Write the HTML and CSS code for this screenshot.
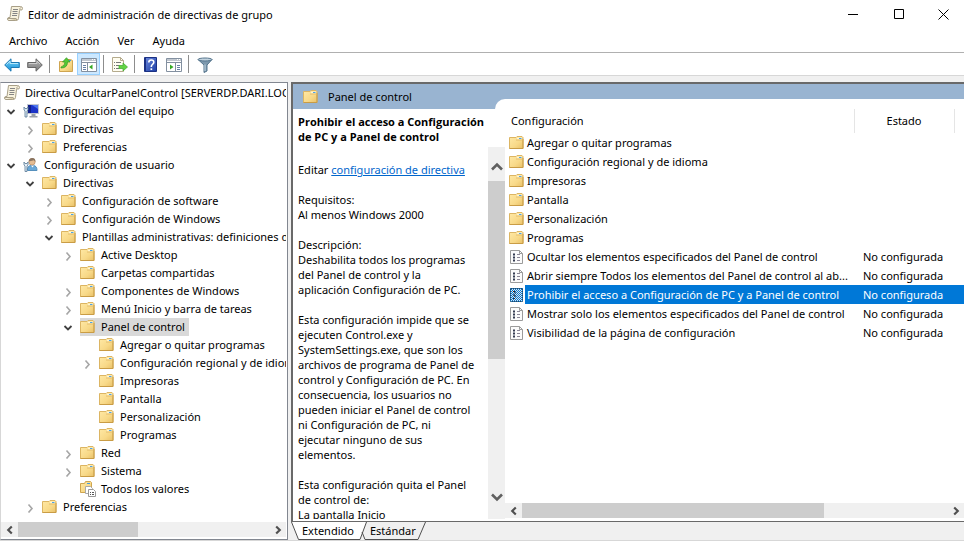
FILE: index.html
```html
<!DOCTYPE html>
<html lang="es">
<head>
<meta charset="utf-8">
<title>Editor de administración de directivas de grupo</title>
<link rel="stylesheet" href="styles.css">
</head>
<body>
<svg class="defs" aria-hidden="true">
  <linearGradient id="gold" x1="0" y1="0" x2="1" y2="1"><stop offset="0" stop-color="#ffe9a6"/><stop offset=".6" stop-color="#f8d988"/><stop offset="1" stop-color="#e8c068"/></linearGradient>
  <linearGradient id="blue" x1="0" y1="0" x2="0" y2="1"><stop offset="0" stop-color="#7fd3f7"/><stop offset="1" stop-color="#0f8fd8"/></linearGradient>
  <linearGradient id="grey" x1="0" y1="0" x2="0" y2="1"><stop offset="0" stop-color="#b5b5b5"/><stop offset="1" stop-color="#7b7b7b"/></linearGradient>
  <linearGradient id="navy" x1="0" y1="0" x2="1" y2="1"><stop offset="0" stop-color="#6d8ade"/><stop offset="1" stop-color="#1d3ea5"/></linearGradient>
  <pattern id="dither" width="2" height="2" patternUnits="userSpaceOnUse"><path fill="#0078d7" d="M0 0h1v1H0zM1 1h1v1H1z"/></pattern>
  <symbol id="folder" viewBox="0 0 16 16">
    <path d="M.5 13.500V2.500h6.500l1-1h5l1 1v11z" fill="url(#gold)" stroke="#dcb563"/>
    <path d="M.5 13.500h13.500V4" fill="none" stroke="#c99c45"/>
    <path d="M7.500 4.500l1-2h4.500v2z" fill="#fff6d4"/><path d="M10 3.500h2.500" stroke="#4ba3e6"/>
    <path d="M7 5h6.500" stroke="#e3bd6c"/>
  </symbol>
  <symbol id="scroll" viewBox="0 0 16 16">
    <path d="M4.500.5h9q2 0 2 2t-2 1.500l-1 .5-1 8q-.5 2-2 2H2Q.5 14.500.5 13t1.500-1.500h1z" fill="#f8f2dd" stroke="#a89f87"/>
    <path d="M1 12.500h8q1 0 .5 2" fill="#d8cba8" stroke="#a89f87"/>
    <path d="M6 3.500h5M5.500 5.500h5M5.500 7.500h5M5 9.500h5" stroke="#858585"/>
    <path d="M13.500 1.500q-1 1-.5 2.500" fill="none" stroke="#a89f87"/>
  </symbol>
  <symbol id="computer" viewBox="0 0 16 16">
    <path d="M4.500 1.500h11v9h-11z" fill="#1c34c8" stroke="#c3c7cf"/><path d="M9 2h6v4z" fill="#4e77ee"/><path d="M5 2h3v8H5z" fill="#11208b"/>
    <path d="M8.500 11h4v2h2v1.500h-8V13h2z" fill="#9aa0a8"/>
    <path d="M1 4v3l1 1v6h2V8l1-1V4L4 5.500H2z" fill="#dceaf5" stroke="#597896" stroke-width=".8"/>
  </symbol>
  <symbol id="user" viewBox="0 0 16 16">
    <path d="M4.500 13.500q-.5-5 4-5h1.500q4 0 4 5z" fill="#6aa8d8" stroke="#5590bd"/><path d="M8 8.500l1.500 2 1.500-2z" fill="#fff"/>
    <circle cx="9" cy="4.800" r="3.200" fill="#e6bd93" stroke="#b98a62" stroke-width=".7"/><path d="M5.800 4.500Q6 .9 9.300 1 12.800 1.200 12.300 5L11 3.300z" fill="#8a7460"/>
    <path d="M1 5v3l1 1v5.500h2V9l1-1V5L4 6.500H2z" fill="#e5eff7" stroke="#597896" stroke-width=".8"/>
  </symbol>
  <symbol id="all" viewBox="0 0 16 16">
    <path d="M.5 11.500v-9h4l1-2h5l1 1v10z" fill="url(#gold)" stroke="#cfa550"/><path d="M7 2.500h3" stroke="#3c9be8"/>
    <path d="M5.500 5.500h5l2 2v5h-7z" fill="#fff" stroke="#aaa"/><path d="M8.500 8.500h5l2 2v5h-7z" fill="#fff" stroke="#999"/>
    <path d="M10 11.500h1M12 11.500h2M10 13.500h1M12 13.500h2" stroke="#555"/>
  </symbol>
  <symbol id="policy" viewBox="0 0 16 16">
    <path d="M1.500 1.500h9l3 3v10h-12z" fill="#fbfbfb" stroke="#9b9b9b"/><path d="M10.500 1.500v3h3" fill="none" stroke="#9b9b9b"/>
    <path d="M4 5.500h2M4 8.500h2M4 11.500h2" stroke="#333b50" stroke-width="2"/><path d="M8 5.500h3M8 8.500h3M8 11.500h3" stroke="#8b8696"/>
  </symbol>
  <symbol id="back" viewBox="0 0 16 16"><path d="M.7 8L7 1.800v3.700h8.300v5H7v3.700z" fill="url(#blue)" stroke="#1b78b4"/><path d="M2.500 7.500L6 4v2.500h8" fill="none" stroke="#b6e8fb"/></symbol>
  <symbol id="forward" viewBox="0 0 16 16"><path d="M15.300 8L9 1.800v3.700H.7v5H9v3.700z" fill="url(#grey)" stroke="#666"/><path d="M2 6.500h8V4l3 3" fill="none" stroke="#ccc"/></symbol>
  <symbol id="up" viewBox="0 0 16 16"><path d="M1.500 14.500V4.500h5l1-2h5l2 1v11z" fill="url(#gold)" stroke="#cfa550"/><path d="M11 3.500h2" stroke="#3c9be8"/><path d="M3 10q4-1 4-5H4.500L8.500.700l3.500 4.300H9.500Q9.500 11 3 11z" fill="#55c936" stroke="#329a24" stroke-width=".7"/></symbol>
  <symbol id="pane-left" viewBox="0 0 16 16"><path d="M.5 1.500h15v13H.5z" fill="#fff" stroke="#8390a0"/><path d="M1 3h14M1 5.500h14" stroke="#8390a0"/><path d="M11 2.500h1M13 2.500h1" stroke="#fff"/><path d="M6.500 6v8" stroke="#8390a0"/><path d="M2 8.500h3M2 10.500h3M2 12.500h3" stroke="#6580a6"/><path d="M11.500 7.500v5L8 10z" fill="#36aa25"/></symbol>
  <symbol id="pane-right" viewBox="0 0 16 16"><path d="M.5 1.500h15v13H.5z" fill="#fff" stroke="#8390a0"/><path d="M1 3h14M1 5.500h14" stroke="#8390a0"/><path d="M11 2.500h1M13 2.500h1" stroke="#fff"/><path d="M9.500 6v8" stroke="#8390a0"/><path d="M11 8.500h3M11 10.500h3M11 12.500h3" stroke="#6580a6"/><path d="M4 7.500v5L7.500 10z" fill="#36aa25"/></symbol>
  <symbol id="export" viewBox="0 0 16 16"><path d="M.5.5h8l3 3v11H.5z" fill="#fffdf0" stroke="#b5ab8d"/><path d="M8.500.5v3h3" fill="none" stroke="#b5ab8d"/><path d="M2 5.500h1M4 5.500h5M2 8.500h1M4 8.500h3M2 11.500h1M4 11.500h3" stroke="#777"/><path d="M7 8.500h4V6l4.500 4-4.500 4v-2.500H7z" fill="#63d444" stroke="#3daa2c" stroke-width=".7"/></symbol>
  <symbol id="help" viewBox="0 0 16 16"><path d="M1.500.5h12v14h-12z" fill="url(#navy)" stroke="#1b3184"/><path d="M2.500 1v13" stroke="#1b3184"/><path d="M5.800 5.500Q5.800 3 8.300 3t2.500 2.200q0 1.300-1.300 2.200T8.300 10" fill="none" stroke="#fff" stroke-width="1.600"/><path d="M7.500 11.300h1.700V13H7.500z" fill="#fff"/></symbol>
  <symbol id="filter" viewBox="0 0 16 16"><path d="M1 2.500h14L10 8v6l-3 1.500V8z" fill="#7d98ad" stroke="#55758d"/><ellipse cx="8" cy="2.500" rx="7" ry="1.500" fill="#c2d3df" stroke="#55758d"/><path d="M8 7.500V14" stroke="#c7d9e5"/></symbol>
  <symbol id="open" viewBox="0 0 10 10"><path d="M1.500 3L5 6.500 8.500 3" fill="none" stroke="#404040" stroke-width="1.800"/></symbol>
  <symbol id="closed" viewBox="0 0 10 10"><path d="M3.500 1.500L7 5.500 3.500 9.500" fill="none" stroke="#a6a6a6" stroke-width="1.600"/></symbol>
  <symbol id="arrow" viewBox="0 0 10 10"><path d="M6.500 2L3.500 5l3 3" fill="none" stroke="#505050" stroke-width="1.800"/></symbol>
  <symbol id="chevron" viewBox="0 0 14 14"><path d="M2 9.500l5-5 5 5" fill="none" stroke="#606060" stroke-width="2.600"/></symbol>
</svg>
<div class="window">
  <header class="titlebar">
    <svg class="icon"><use href="#scroll"/></svg>
    <h1>Editor de administración de directivas de grupo</h1>
    <div class="controls">
      <button aria-label="Minimizar"><svg viewBox="0 0 11 11"><path d="M0 5.500h10"/></svg></button>
      <button aria-label="Maximizar"><svg viewBox="0 0 11 11"><path d="M.5.5h9v9h-9z"/></svg></button>
      <button class="close" aria-label="Cerrar"><svg viewBox="0 0 11 11"><path d="M.5.5l10 10M10.500.5l-10 10"/></svg></button>
    </div>
  </header>
  <nav class="menubar"><button>Archivo</button><button>Acción</button><button>Ver</button><button>Ayuda</button></nav>
  <div class="toolbar">
    <button aria-label="Atrás"><svg class="icon"><use href="#back"/></svg></button>
    <button aria-label="Adelante"><svg class="icon"><use href="#forward"/></svg></button>
    <i class="sep"></i>
    <button aria-label="Subir un nivel"><svg class="icon"><use href="#up"/></svg></button>
    <button class="active" aria-label="Mostrar u ocultar árbol"><svg class="icon"><use href="#pane-left"/></svg></button>
    <i class="sep"></i>
    <button aria-label="Exportar lista"><svg class="icon"><use href="#export"/></svg></button>
    <i class="sep"></i>
    <button aria-label="Ayuda"><svg class="icon"><use href="#help"/></svg></button>
    <button aria-label="Mostrar u ocultar panel de acciones"><svg class="icon"><use href="#pane-right"/></svg></button>
    <i class="sep"></i>
    <button aria-label="Filtro"><svg class="icon"><use href="#filter"/></svg></button>
  </div>
  <main class="workspace">
    <section class="tree-pane">
      <div class="tree">
        <div class="node root"><svg class="icon"><use href="#scroll"/></svg><span>Directiva OcultarPanelControl [SERVERDP.DARI.LOCAL]</span></div>
        <ul>
          <li><div class="node"><button aria-label="Contraer"><svg><use href="#open"/></svg></button><svg class="icon"><use href="#computer"/></svg><span>Configuración del equipo</span></div>
            <ul>
              <li><div class="node"><button aria-label="Expandir"><svg><use href="#closed"/></svg></button><svg class="icon"><use href="#folder"/></svg><span>Directivas</span></div></li>
              <li><div class="node"><button aria-label="Expandir"><svg><use href="#closed"/></svg></button><svg class="icon"><use href="#folder"/></svg><span>Preferencias</span></div></li>
            </ul></li>
          <li><div class="node"><button aria-label="Contraer"><svg><use href="#open"/></svg></button><svg class="icon"><use href="#user"/></svg><span>Configuración de usuario</span></div>
            <ul>
              <li><div class="node"><button aria-label="Contraer"><svg><use href="#open"/></svg></button><svg class="icon"><use href="#folder"/></svg><span>Directivas</span></div>
                <ul>
                  <li><div class="node"><button aria-label="Expandir"><svg><use href="#closed"/></svg></button><svg class="icon"><use href="#folder"/></svg><span>Configuración de software</span></div></li>
                  <li><div class="node"><button aria-label="Expandir"><svg><use href="#closed"/></svg></button><svg class="icon"><use href="#folder"/></svg><span>Configuración de Windows</span></div></li>
                  <li><div class="node"><button aria-label="Contraer"><svg><use href="#open"/></svg></button><svg class="icon"><use href="#folder"/></svg><span>Plantillas administrativas: definiciones de directiva</span></div>
                    <ul>
                      <li><div class="node"><button aria-label="Expandir"><svg><use href="#closed"/></svg></button><svg class="icon"><use href="#folder"/></svg><span>Active Desktop</span></div></li>
                      <li><div class="node leaf"><svg class="icon"><use href="#folder"/></svg><span>Carpetas compartidas</span></div></li>
                      <li><div class="node"><button aria-label="Expandir"><svg><use href="#closed"/></svg></button><svg class="icon"><use href="#folder"/></svg><span>Componentes de Windows</span></div></li>
                      <li><div class="node"><button aria-label="Expandir"><svg><use href="#closed"/></svg></button><svg class="icon"><use href="#folder"/></svg><span>Menú Inicio y barra de tareas</span></div></li>
                      <li><div class="node current"><button aria-label="Contraer"><svg><use href="#open"/></svg></button><svg class="icon"><use href="#folder"/></svg><span>Panel de control</span></div>
                        <ul>
                          <li><div class="node leaf"><svg class="icon"><use href="#folder"/></svg><span>Agregar o quitar programas</span></div></li>
                          <li><div class="node"><button aria-label="Expandir"><svg><use href="#closed"/></svg></button><svg class="icon"><use href="#folder"/></svg><span>Configuración regional y de idioma</span></div></li>
                          <li><div class="node leaf"><svg class="icon"><use href="#folder"/></svg><span>Impresoras</span></div></li>
                          <li><div class="node leaf"><svg class="icon"><use href="#folder"/></svg><span>Pantalla</span></div></li>
                          <li><div class="node leaf"><svg class="icon"><use href="#folder"/></svg><span>Personalización</span></div></li>
                          <li><div class="node leaf"><svg class="icon"><use href="#folder"/></svg><span>Programas</span></div></li>
                        </ul></li>
                      <li><div class="node"><button aria-label="Expandir"><svg><use href="#closed"/></svg></button><svg class="icon"><use href="#folder"/></svg><span>Red</span></div></li>
                      <li><div class="node"><button aria-label="Expandir"><svg><use href="#closed"/></svg></button><svg class="icon"><use href="#folder"/></svg><span>Sistema</span></div></li>
                      <li><div class="node leaf"><svg class="icon"><use href="#all"/></svg><span>Todos los valores</span></div></li>
                    </ul></li>
                </ul></li>
              <li><div class="node"><button aria-label="Expandir"><svg><use href="#closed"/></svg></button><svg class="icon"><use href="#folder"/></svg><span>Preferencias</span></div></li>
            </ul></li>
        </ul>
      </div>
      <div class="hscroll tree-scroll">
        <button aria-label="Desplazar a la izquierda"><svg><use href="#arrow"/></svg></button>
        <div class="track"><div class="thumb"></div></div>
        <button class="end" aria-label="Desplazar a la derecha"><svg><use href="#arrow"/></svg></button>
      </div>
    </section>
    <section class="detail">
      <div class="detail-frame">
        <div class="banner"><svg class="icon"><use href="#folder"/></svg><span>Panel de control</span></div>
        <div class="detail-body">
          <article class="info">
            <h2>Prohibir el acceso a Configuración<br>de PC y a Panel de control</h2>
            <div class="info-scroll">
              <div class="info-text">
                <p>Editar <a href="#directiva">configuración de directiva</a></p>
                <p>Requisitos:<br>Al menos Windows 2000</p>
                <p>Descripción:<br>Deshabilita todos los programas<br>del Panel de control y la<br>aplicación Configuración de PC.</p>
                <p>Esta configuración impide que se<br>ejecuten Control.exe y<br>SystemSettings.exe, que son los<br>archivos de programa de Panel de<br>control y Configuración de PC. En<br>consecuencia, los usuarios no<br>pueden iniciar el Panel de control<br>ni Configuración de PC, ni<br>ejecutar ninguno de sus<br>elementos.</p>
                <p>Esta configuración quita el Panel<br>de control de:<br>La pantalla Inicio</p>
              </div>
              <div class="vscroll">
                <button aria-label="Desplazar hacia arriba"><svg><use href="#chevron"/></svg></button>
                <div class="track"><div class="thumb"></div></div>
                <button class="end" aria-label="Desplazar hacia abajo"><svg><use href="#chevron"/></svg></button>
              </div>
            </div>
          </article>
          <div class="list">
            <table>
              <colgroup><col><col class="state"><col class="comment"></colgroup>
              <thead><tr><th>Configuración</th><th>Estado</th><th></th></tr></thead>
              <tbody>
                <tr><td><div class="name"><svg class="icon"><use href="#folder"/></svg><span>Agregar o quitar programas</span></div></td><td></td><td></td></tr>
                <tr><td><div class="name"><svg class="icon"><use href="#folder"/></svg><span>Configuración regional y de idioma</span></div></td><td></td><td></td></tr>
                <tr><td><div class="name"><svg class="icon"><use href="#folder"/></svg><span>Impresoras</span></div></td><td></td><td></td></tr>
                <tr><td><div class="name"><svg class="icon"><use href="#folder"/></svg><span>Pantalla</span></div></td><td></td><td></td></tr>
                <tr><td><div class="name"><svg class="icon"><use href="#folder"/></svg><span>Personalización</span></div></td><td></td><td></td></tr>
                <tr><td><div class="name"><svg class="icon"><use href="#folder"/></svg><span>Programas</span></div></td><td></td><td></td></tr>
                <tr><td><div class="name"><svg class="icon"><use href="#policy"/></svg><span>Ocultar los elementos especificados del Panel de control</span></div></td><td>No configurada</td><td></td></tr>
                <tr><td><div class="name"><svg class="icon"><use href="#policy"/></svg><span>Abrir siempre Todos los elementos del Panel de control al ab...</span></div></td><td>No configurada</td><td></td></tr>
                <tr class="selected"><td><div class="name"><svg class="icon" viewBox="0 0 16 16"><path d="M1 1h13v14H1z" fill="#e4e4e4"/><path d="M1.500 1.500h12v13h-12z" fill="none" stroke="#444"/><path d="M1 1h13v14H1z" fill="url(#dither)" shape-rendering="crispEdges"/><path d="M4 4.500h2v2M4 8h2v2M4 11.500h2" fill="none" stroke="#1a2a3c"/></svg><span>Prohibir el acceso a Configuración de PC y a Panel de control</span></div></td><td>No configurada</td><td></td></tr>
                <tr><td><div class="name"><svg class="icon"><use href="#policy"/></svg><span>Mostrar solo los elementos especificados del Panel de control</span></div></td><td>No configurada</td><td></td></tr>
                <tr><td><div class="name"><svg class="icon"><use href="#policy"/></svg><span>Visibilidad de la página de configuración</span></div></td><td>No configurada</td><td></td></tr>
              </tbody>
            </table>
            <div class="hscroll list-scroll">
              <button aria-label="Desplazar a la izquierda"><svg><use href="#arrow"/></svg></button>
              <div class="track"><div class="thumb"></div></div>
              <button class="end" aria-label="Desplazar a la derecha"><svg><use href="#arrow"/></svg></button>
            </div>
          </div>
        </div>
      </div>
      <div class="tabs">
        <svg class="tab-shape" viewBox="0 0 136 19" aria-hidden="true"><path d="M0 0h75l-6 17.500H7.500z" fill="#fff"/><path d="M.5 0l7 17.500H69L75.500 0M71 10l3 7.500h53L134.500 0" fill="none" stroke="#505050"/></svg>
        <button>Extendido</button><button>Estándar</button>
      </div>
    </section>
  </main>
</div>
</body>
</html>
```
FILE: styles.css
```css
* { box-sizing: border-box; }
body { margin: 0; font: 11px/15px "Noto Sans", "Open Sans", sans-serif; color: #000; background: #f0f0f0; }
button { border: 0; padding: 0; background: none; font: inherit; color: inherit; }
h1, h2, p, ul { margin: 0; padding: 0; font-size: inherit; }
ul { list-style: none; }
.defs { position: absolute; width: 0; height: 0; }
.icon { width: 16px; height: 16px; flex: none; }
.window { height: 100vh; display: flex; flex-direction: column; border-bottom: 1px solid #d7d7d7; }

.titlebar { display: flex; align-items: center; height: 30px; flex: none; padding: 0 0 2px 7px; background: #fff; }
.titlebar h1 { margin-left: 5px; font-weight: 400; }
.controls { display: flex; margin-left: auto; }
.controls button { width: 46px; height: 28px; display: flex; align-items: center; justify-content: center; }
.controls .close { width: 42px; }
.controls svg { width: 11px; height: 11px; fill: none; stroke: #000; }
.menubar { display: flex; gap: 18px; height: 23px; flex: none; padding: 0 0 2px 9px; background: #fff; border-bottom: 1px solid #b0b0b0; }
.toolbar { display: flex; align-items: center; height: 23px; flex: none; background: #fff; border-bottom: 1px solid #d7d7d7; }
.toolbar button { width: 23px; height: 22px; display: flex; align-items: center; justify-content: center; padding-top: 2px; }
.toolbar .active { background: #cce8ff; border: 1px solid #99d1ff; }
.toolbar .sep { width: 5px; height: 18px; margin-left: 3px; border-left: 1px solid #8d8d8d; }

.workspace { flex: 1; min-height: 0; display: grid; grid-template-columns: 288px minmax(0, 1fr); column-gap: 3px; padding-top: 6px; }
.tree-pane { min-height: 0; display: flex; flex-direction: column; background: #fff; border: 1px solid #828790; border-left-color: #d7d7d7; padding: 0 1px 2px 0; }
.tree { flex: 1; min-height: 0; overflow: hidden; padding-top: 1px; }
.tree ul ul { padding-left: 19px; }
.node { display: flex; align-items: center; height: 18px; white-space: nowrap; padding-left: 1px; }
.node.root { padding-left: 3px; }
.node.leaf { padding-left: 22px; }
.node button { width: 21px; height: 18px; display: flex; align-items: center; padding: 1px 0 0 4px; flex: none; }
.node button svg { width: 10px; height: 10px; }
.node span { line-height: 18px; padding-left: 5px; }
.node.current span, .node.current .icon { background: #d9d9d9; }
.node.current .icon { height: 18px; }
.node.current span { padding-right: 4px; }

.hscroll { display: flex; height: 15px; flex: none; background: #f0f0f0; }
.hscroll button { width: 17px; display: flex; align-items: center; justify-content: center; }
.hscroll svg { width: 12px; height: 12px; }
.hscroll .end svg { transform: rotate(180deg); }
.track { flex: 1; }
.thumb { background: #cdcdcd; }
.hscroll .thumb { height: 100%; }
.tree-scroll .thumb { width: 48%; }
.list-scroll .thumb { width: 71%; }

.detail { min-width: 0; min-height: 0; display: flex; flex-direction: column; }
.detail-frame { flex: 1; min-height: 0; display: flex; flex-direction: column; border-style: solid; border-width: 2px 0 0 2px; border-color: #696969; background: #fff; padding-bottom: 2px; }
.banner { display: flex; align-items: center; height: 25px; flex: none; padding-left: 10px; background: #99b4d1; }
.banner span { margin-left: 9px; }
.detail-body { flex: 1; min-height: 0; display: grid; grid-template-columns: 212px minmax(0, 1fr); }
.info { min-height: 0; display: flex; flex-direction: column; }
.info h2 { height: 38px; padding: 5px 0 0 5px; font-family: "Open Sans", sans-serif; white-space: nowrap; }
.info-scroll { flex: 1; min-height: 0; display: flex; }
.info-text { flex: 1; min-width: 0; overflow: hidden; padding: 15px 0 0 5px; white-space: nowrap; }
.info-text p { margin-bottom: 15px; }
.info a { color: #0066cc; }
.vscroll { width: 17px; display: flex; flex-direction: column; background: #f0f0f0; padding-bottom: 14px; }
.vscroll button { height: 34px; display: flex; align-items: center; justify-content: center; padding-top: 6px; }
.vscroll .end { height: 17px; padding: 0; }
.vscroll svg { width: 14px; height: 14px; }
.vscroll .end svg { transform: rotate(180deg); }
.vscroll .thumb { height: 58%; }

.list { position: relative; min-height: 0; display: flex; flex-direction: column; padding-bottom: 1px; }
.list::before { content: ""; position: absolute; left: -10px; right: 0; top: -10px; height: 10px; background: #fff; border-top-left-radius: 10px; }
table { width: 100%; table-layout: fixed; border-collapse: collapse; }
.state { width: 100px; }
.comment { width: 10px; }
th, td { padding: 0; text-align: left; font-weight: 400; white-space: nowrap; }
th { height: 24px; padding: 0 0 2px 6px; border-right: 1px solid #e5e5e5; }
th + th { text-align: center; padding-left: 0; }
th:last-child { border: 0; }
td { height: 19px; padding-left: 9px; }
td:first-child { padding-left: 4px; }
.name { display: flex; align-items: center; }
.name span { flex: 1; line-height: 19px; padding-left: 2px; }
.selected { color: #fff; }
.selected .name span, .selected td + td { background: #0078d7; }
.list-scroll { margin-top: auto; }

.tabs { position: relative; display: flex; align-items: center; height: 19px; flex: none; gap: 16px; padding: 0 0 2px 11px; border-top: 1px solid #696969; }
.tab-shape { position: absolute; left: 0; top: 0; width: 136px; height: 19px; }
.tabs button { position: relative; }
```
